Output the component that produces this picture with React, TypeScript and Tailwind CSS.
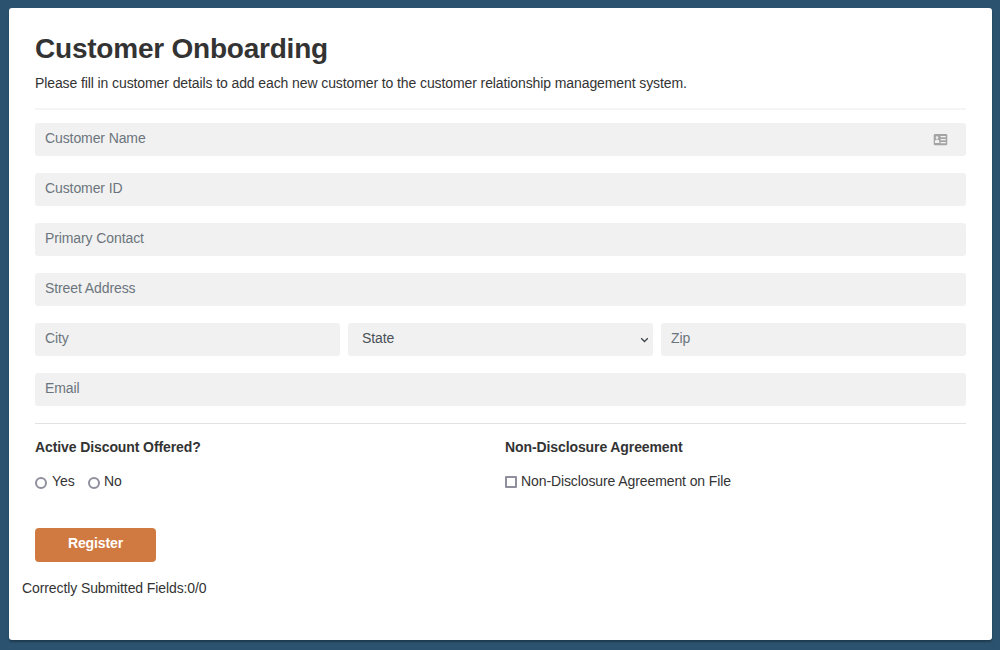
import React from "react";

function Field({ label, id = false }: { label: string; id?: boolean }) {
  return (
    <label className="flex h-[33px] min-w-0 flex-1 basis-0 items-start justify-between rounded-[3px] bg-[#f1f1f1] pl-[10px] pr-[18px]">
      <input
        type="text"
        placeholder={label}
        className="h-[30px] w-full min-w-0 flex-1 bg-transparent text-[14px] tracking-[-0.1px] text-[#333] outline-none placeholder:text-[#6c757d]"
      />
      {id && <ContactIcon />}
    </label>
  );
}

function ContactIcon() {
  return (
    <svg className="mt-[10px] h-[13px] w-[15px]" viewBox="0 0 15 13">
      <rect x="0.75" y="1" width="13.5" height="11.2" rx="1.2" fill="#a4a4a4" />
      <circle cx="4" cy="4.6" r="1.3" fill="#f1f1f1" />
      <path d="M2 10V8.4c0-1.3.8-2 2.1-2s2.2.7 2.2 2V10z" fill="#f1f1f1" />
      <path d="M7.6 3.6h5.2M7.6 6.6h5.2M7.6 9.6h5.2" stroke="#f1f1f1" strokeWidth="1.2" />
    </svg>
  );
}

export default function App() {
  return (
    <main className="h-[650px] bg-[#2b536f] pl-[9px] pr-2 pt-2 font-['Liberation_Sans',Arial,sans-serif] text-[14px] leading-5 tracking-[-0.1px] text-[#333]">
      <section className="flex h-[632px] flex-col rounded-[3px] bg-white px-[26px] pt-[24px] shadow-[0_2px_2px_rgba(0,0,0,0.3)]">
        <h1 className="h-[41px] whitespace-nowrap text-[28px] font-bold leading-[34px] tracking-[-0.22px]">Customer Onboarding</h1>
        <p className="h-[35px] whitespace-nowrap">
          Please fill in customer details to add each new customer to the customer relationship management system.
        </p>
        <div className="mb-[13px] h-[2px] w-full bg-[#f5f5f5]" />
        <div className="flex flex-col gap-[17px]">
          <div className="flex"><Field label="Customer Name" id /></div>
          <div className="flex"><Field label="Customer ID" /></div>
          <div className="flex"><Field label="Primary Contact" /></div>
          <div className="flex"><Field label="Street Address" /></div>
          <div className="grid grid-cols-3 gap-2">
            <Field label="City" />
            <div className="flex h-[33px] min-w-0 justify-between rounded-[3px] bg-[#f1f1f1] pl-[14px] pr-1 leading-[31px] text-[#495057]">
              <span>State</span>
              <svg className="mt-[13px] h-[8px] w-[9px]" viewBox="0 0 9 8" fill="none">
                <path d="M1.2 2.2 4.5 5.5 7.8 2.2" stroke="#40464b" strokeWidth="1.3" />
              </svg>
            </div>
            <Field label="Zip" />
          </div>
          <div className="flex"><Field label="Email" /></div>
        </div>
        <div className="mt-[17px] h-0 w-full border-t border-[#e2e2e2]" />
        <div className="flex h-[104px] pt-[13px]">
          <div className="w-[470px]">
            <h2 className="font-bold">Active Discount Offered?</h2>
            <div className="mt-[14px] flex">
              <label className="flex w-[53px]">
                <input type="radio" name="discount" className="mr-[5px] mt-[6px] h-3 w-3 appearance-none rounded-full border-2 border-[#8f8f9d] bg-white" />
                Yes
              </label>
              <label className="flex">
                <input type="radio" name="discount" className="mr-[4px] mt-[6px] h-3 w-3 appearance-none rounded-full border-2 border-[#8f8f9d] bg-white" />
                No
              </label>
            </div>
          </div>
          <div>
            <h2 className="font-bold">Non-Disclosure Agreement</h2>
            <label className="mt-[14px] flex">
              <input type="checkbox" className="mr-[4px] mt-[5px] h-3 w-3 appearance-none rounded-[1px] border-2 border-[#8f8f9d] bg-white" />
              Non-Disclosure Agreement on File
            </label>
          </div>
        </div>
        <button className="flex h-[34px] w-[121px] justify-center rounded-[4px] bg-[#d07a41] font-bold leading-[31px] text-white">Register</button>
        <p className="-ml-[13px] mt-[16px]">Correctly Submitted Fields:0/0</p>
      </section>
    </main>
  );
}
